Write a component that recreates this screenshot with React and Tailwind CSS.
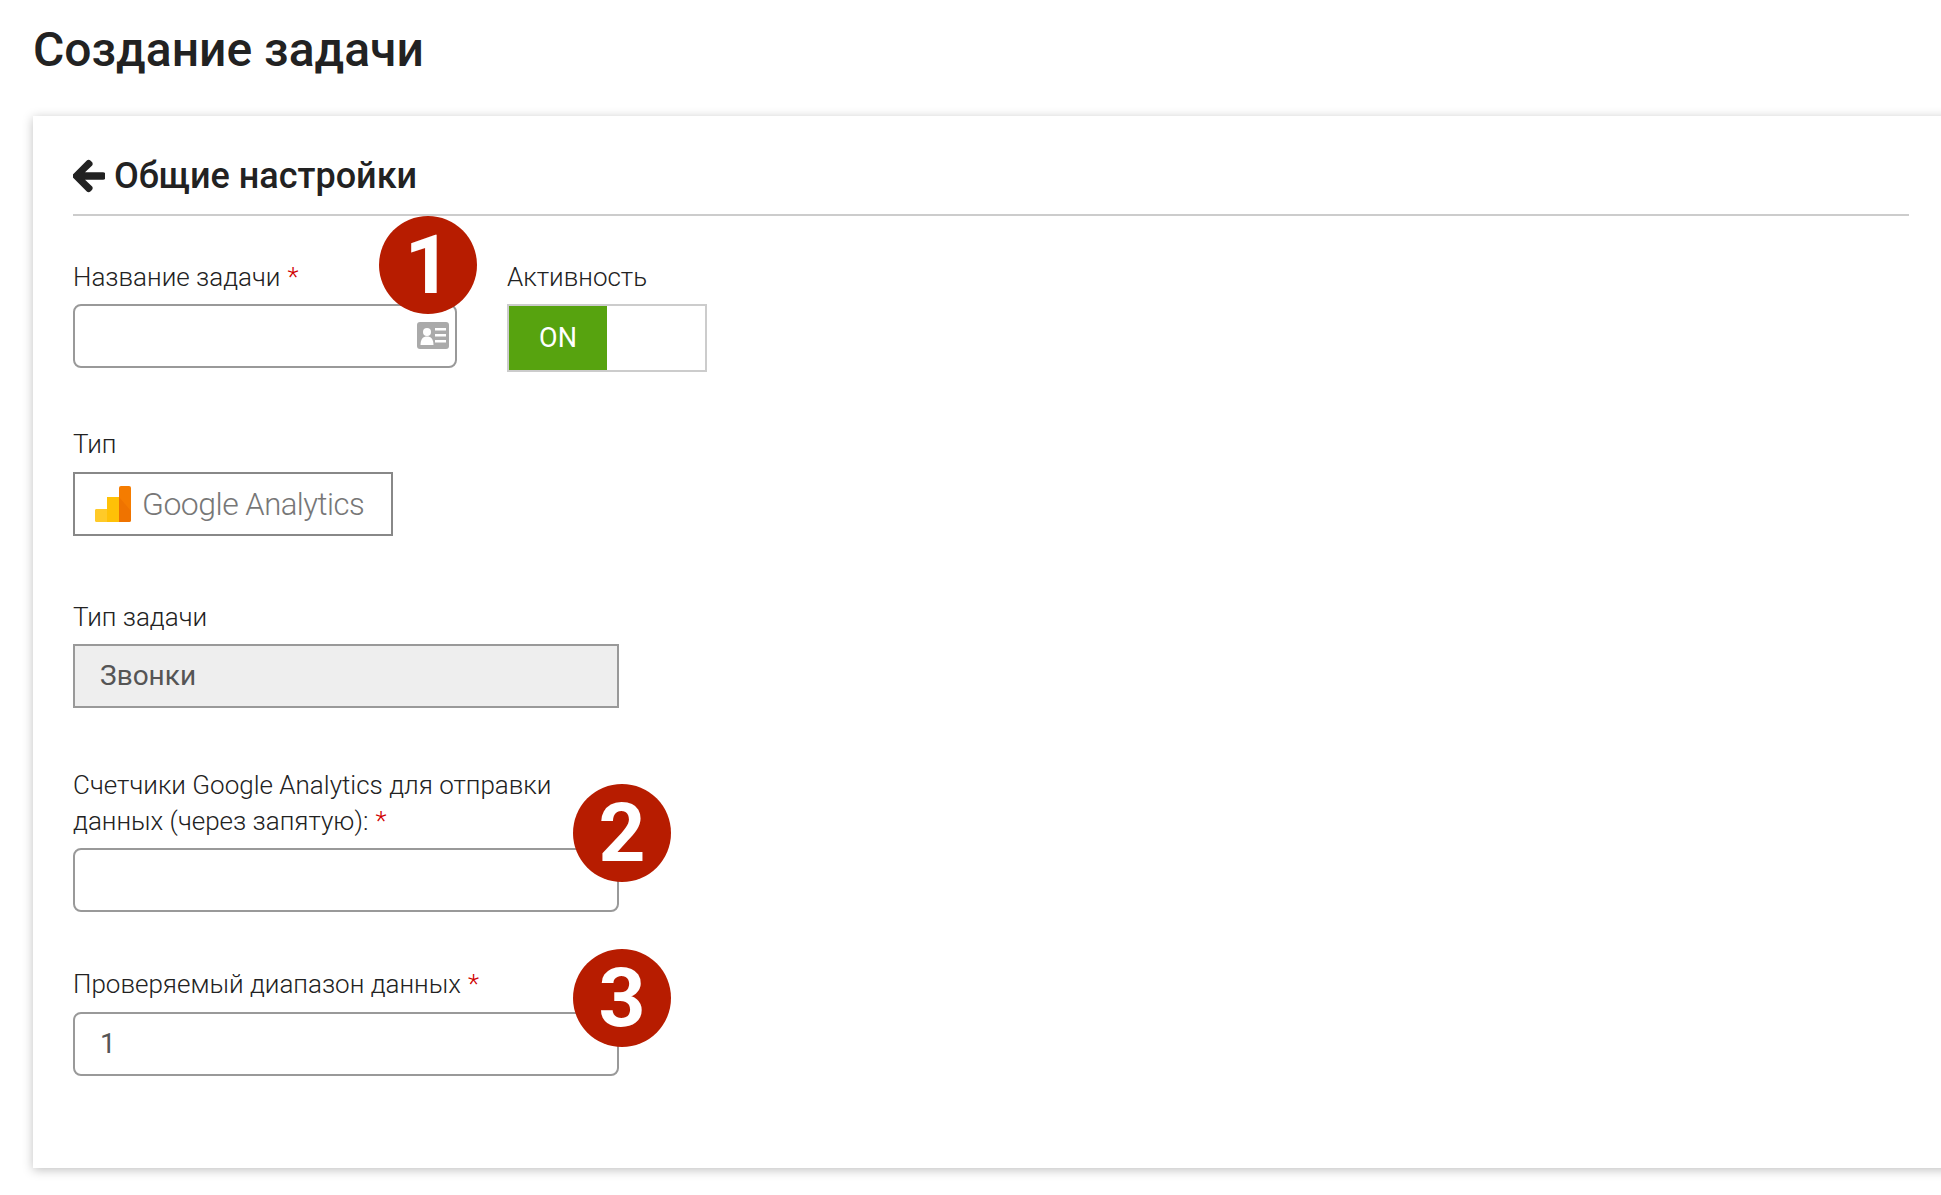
import { FaArrowLeft } from 'react-icons/fa';

const font = "font-['Roboto','Liberation_Sans',sans-serif]";

function Badge({ children, className }) {
  return (
    <div className={`absolute w-[98px] h-[98px] rounded-full bg-[#b71c00] text-white flex items-center justify-center text-[82px] leading-none font-bold ${className}`}>
      {children}
    </div>
  );
}

function Label({ children, required, className = 'mb-[9px]' }) {
  return (
    <label className={`block text-[26px] leading-[36px] font-light text-[#222] ${className}`}>
      {children}
      {required && <span className="text-[#d00000] ml-[7px]">*</span>}
    </label>
  );
}

function CardIcon() {
  return (
    <svg width="32" height="27" viewBox="0 0 32 27" className="absolute right-[6px] top-[16px]">
      <rect width="32" height="27" rx="3" fill="#aaaaaa" />
      <circle cx="10" cy="10" r="4" fill="#fff" />
      <path d="M3.500 23c0-6 2.500-8.500 6.500-8.500s6.500 2.500 6.500 8.500z" fill="#fff" />
      <rect x="18" y="6" width="11" height="2.500" fill="#fff" />
      <rect x="18" y="12" width="11" height="2.500" fill="#fff" />
      <rect x="18" y="18" width="11" height="2.500" fill="#fff" />
    </svg>
  );
}

function AnalyticsIcon() {
  return (
    <svg width="36" height="36" viewBox="0 0 36 36">
      <path d="M2 23h10V11h12v25H2a2 2 0 0 1-2-2V25a2 2 0 0 1 2-2z" fill="#ffc107" />
      <path d="M0 25a2 2 0 0 1 2-2h10v13H2a2 2 0 0 1-2-2z" fill="#ffca28" />
      <path d="M24 2a2 2 0 0 1 2-2h8a2 2 0 0 1 2 2v32a2 2 0 0 1-2 2H24z" fill="#f57c00" />
      <path d="M24 11l12 14v9a2 2 0 0 1-2 2H24z" fill="#ef7300" />
    </svg>
  );
}

export default function App() {
  return (
    <div className={`${font} relative h-[1195px] overflow-hidden bg-white pl-[33px] pt-[16px]`}>
      <h1 className="text-[48px] leading-[68px] font-medium text-[#222] mb-[32px]">Создание задачи</h1>

      <div className="relative bg-white pl-[40px] pr-[52px] pt-[33px] pb-[92px] shadow-[0_2px_10px_rgba(0,0,0,0.25)] mr-[-20px]">
        <div className="flex items-center gap-[9px] h-[54px] box-content pb-[11px] border-b-2 border-[#cccccc]">
          <FaArrowLeft size={36} className="text-[#222] w-[32px] stroke-[#222] stroke-[24px]" />
          <h2 className="text-[36px] leading-[54px] font-medium text-[#222]">Общие настройки</h2>
        </div>

        <div className="flex mt-[43px]">
          <div className="w-[384px] mr-[50px]">
            <Label required>Название задачи</Label>
            <div className="relative h-[64px] border-2 border-[#999] rounded-[8px]">
              <CardIcon />
            </div>
          </div>
          <div>
            <Label>Активность</Label>
            <div className="flex w-[200px] h-[68px] border-2 border-[#cccccc]">
              <div className="w-[98px] bg-[#57a30f] text-white text-[27px] flex items-center justify-center">ON</div>
            </div>
          </div>
        </div>

        <Label className="mt-[54px] mb-[10px]">Тип</Label>
        <div className="flex items-center w-[320px] h-[64px] border-2 border-[#888] pl-[20px] gap-[11px]">
          <AnalyticsIcon />
          <span className="text-[31px] font-light text-[#777] tracking-[-0.5px]"><span className="text-[32px]">Google</span> Analytics</span>
        </div>

        <Label className="mt-[63px] mb-[9px]">Тип задачи</Label>
        <div className="flex items-center w-[546px] h-[64px] border-2 border-[#999] bg-[#eeeeee] pl-[25px] text-[28px] text-[#555]">Звонки</div>

        <div className="w-[546px] mt-[59px]">
          <Label required>Счетчики Google Analytics для отправки данных (через запятую):</Label>
          <div className="h-[64px] border-2 border-[#999] rounded-[8px]" />
        </div>

        <div className="w-[546px] mt-[54px]">
          <Label className="mb-[10px]" required>Проверяемый диапазон данных</Label>
          <div className="flex items-center h-[64px] border-2 border-[#999] rounded-[8px] pl-[25px] text-[28px] text-[#555]">1</div>
        </div>
      </div>

      <Badge className="left-[379px] top-[216px]">1</Badge>
      <Badge className="left-[573px] top-[784px]">2</Badge>
      <Badge className="left-[573px] top-[949px]">3</Badge>
    </div>
  );
}
